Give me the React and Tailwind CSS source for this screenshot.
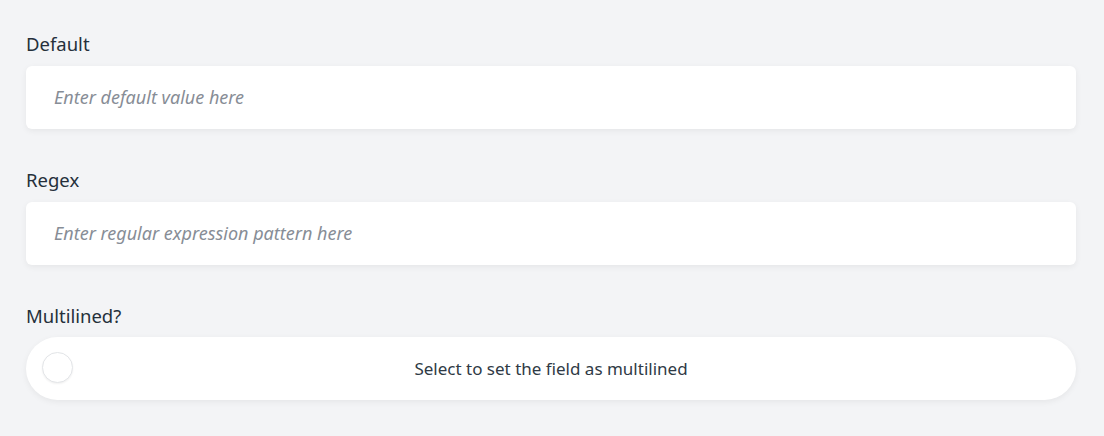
export default function App() {
  const font = { fontFamily: '"Noto Sans", "Open Sans", sans-serif' };
  return (
    <div className="min-h-[436px] w-[1104px] bg-[#f3f4f6] pl-[26px] pr-[28px] pt-[32px]" style={font}>
      <div className="h-[24px] text-[18.5px] leading-[24px] text-[#25303b]">Default</div>
      <div className="mt-[10px] flex h-[63px] items-center rounded-[6px] bg-white px-[28px] shadow-[0_2px_6px_rgba(0,0,0,0.06)]">
        <span className="text-[18px] italic text-[#878d96]">Enter default value here</span>
      </div>
      <div className="mt-[39px] h-[24px] text-[18.5px] leading-[24px] text-[#25303b]">Regex</div>
      <div className="mt-[10px] flex h-[63px] items-center rounded-[6px] bg-white px-[28px] shadow-[0_2px_6px_rgba(0,0,0,0.06)]">
        <span className="text-[18px] italic text-[#878d96]">Enter regular expression pattern here</span>
      </div>
      <div className="mt-[39px] h-[24px] text-[18.5px] leading-[24px] text-[#25303b]">Multilined?</div>
      <div className="relative mt-[9px] flex h-[63px] items-center justify-center rounded-full bg-white shadow-[0_2px_6px_rgba(0,0,0,0.06)]">
        <div className="absolute left-[16px] top-[15px] h-[31px] w-[31px] rounded-full border border-[#e3e5e8] bg-white shadow-[0_1px_2px_rgba(0,0,0,0.06)]" />
        <span className="text-[17px] text-[#2f3a45]">Select to set the field as multilined</span>
      </div>
    </div>
  );
}
